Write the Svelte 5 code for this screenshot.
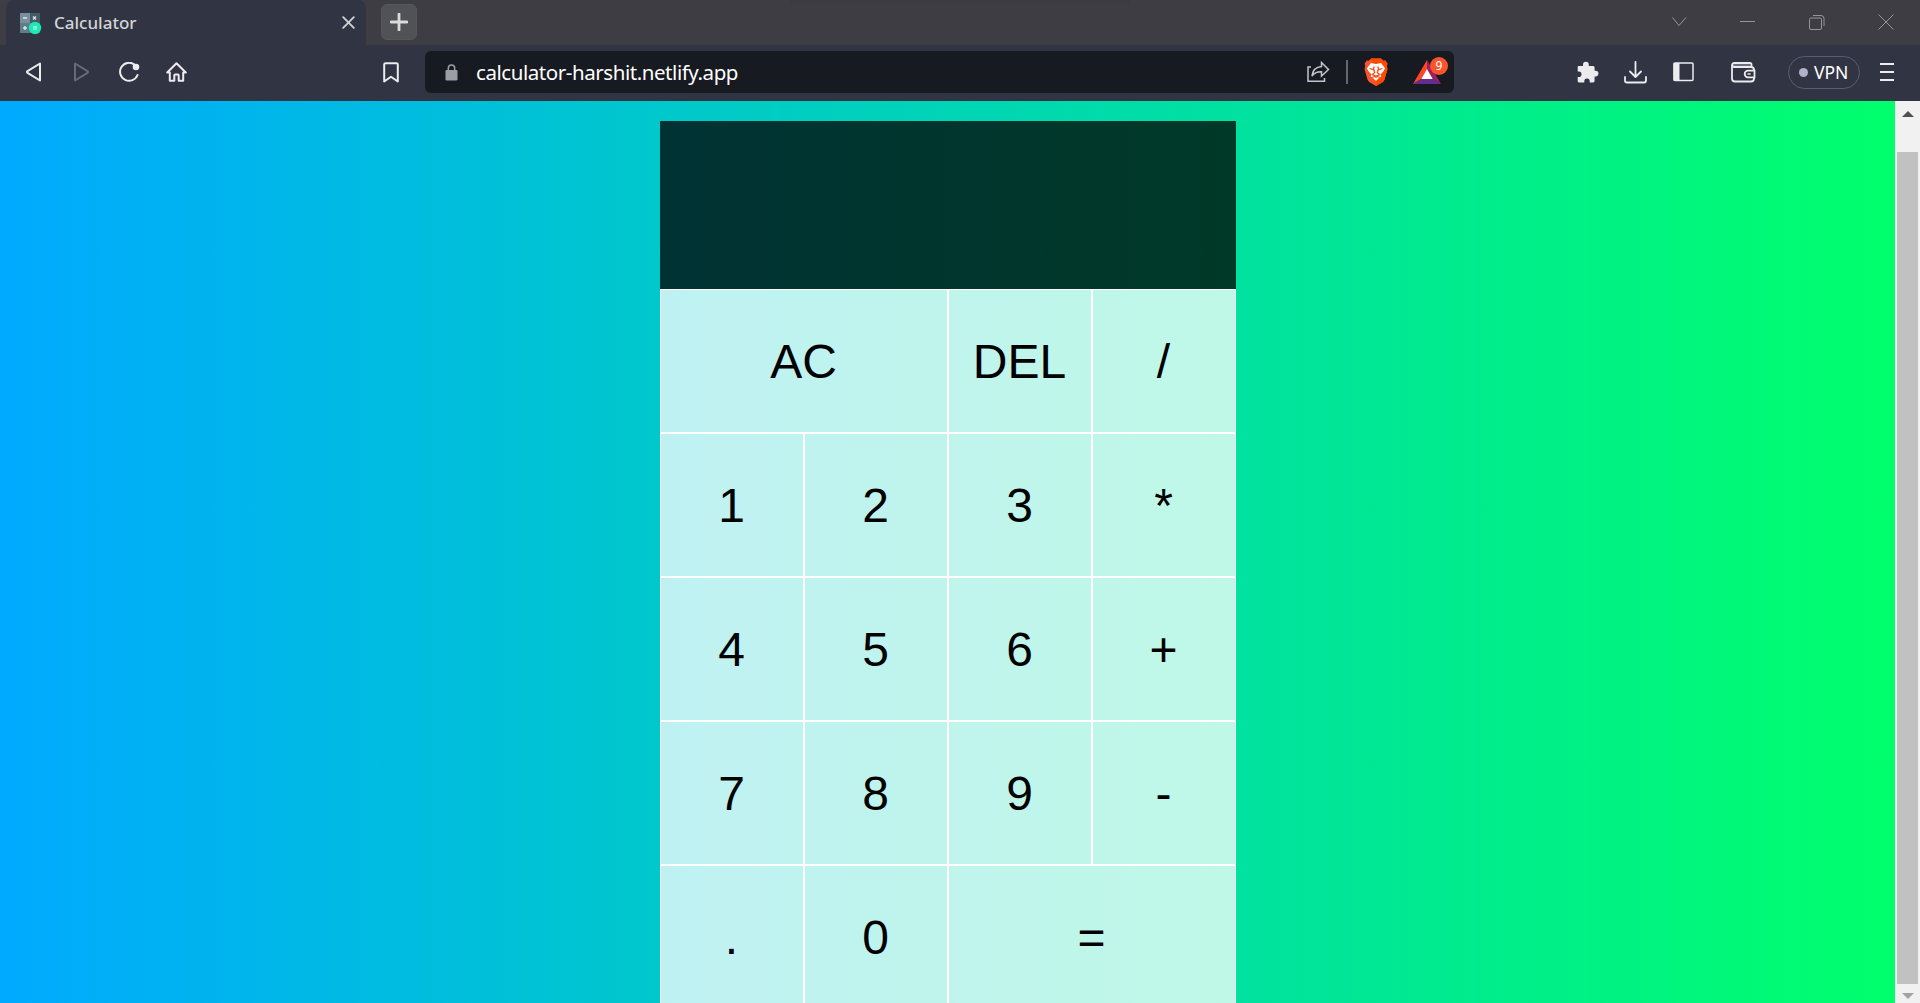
<script>
  const keys = [
    { label: 'AC', wide: true }, { label: 'DEL' }, { label: '/' },
    { label: '1' }, { label: '2' }, { label: '3' }, { label: '*' },
    { label: '4' }, { label: '5' }, { label: '6' }, { label: '+' },
    { label: '7' }, { label: '8' }, { label: '9' }, { label: '-' },
    { label: '.' }, { label: '0' }, { label: '=', wide: true }
  ];
  let output = $state('');

  function press(label) {
    if (label === 'AC') output = '';
    else if (label === 'DEL') output = output.slice(0, -1);
    else if (label !== '=') output += label;
  }
</script>

<div class="window">
  <header class="titlebar">
    <div class="tab">
      <svg class="favicon" width="22" height="22" viewBox="0 0 22 22">
        <rect width="20" height="20" rx="1" fill="#546e7a" />
        <path d="M1 0h9v10H0V1a1 1 0 0 1 1-1z" fill="#78909c" />
        <path d="M10 0h9a1 1 0 0 1 1 1v9H10z" fill="#455a64" />
        <path d="M0 10h10v10H1a1 1 0 0 1-1-1z" fill="#607d8b" />
        <path d="M3 5h4M13 3.500l3 3M16 3.500l-3 3M3 15h4M5 13v4" stroke="#dce3e6" stroke-width="1.400" />
        <circle cx="15" cy="15" r="6.200" fill="#1de9b6" />
        <path d="M13 14h4M13 16.200h4" stroke="#a7f5e0" stroke-width="1.300" />
      </svg>
      <span class="tab-title">Calculator</span>
      <svg class="tab-close" width="13" height="13" viewBox="0 0 13 13"><path d="M1.200 1.200l10.600 10.600M11.800 1.200L1.200 11.800" stroke="#cfd0d4" stroke-width="1.900" stroke-linecap="round" /></svg>
    </div>
    <button class="new-tab" aria-label="New tab">
      <svg width="18" height="18" viewBox="0 0 18 18"><path d="M9 1v16M1 9h16" stroke="#dadadb" stroke-width="2.800" stroke-linecap="round" /></svg>
    </button>
    <div class="controls">
      <svg width="15" height="15" viewBox="0 0 15 15"><path d="M.5 3.500l6.500 8 7-8" /></svg>
      <svg width="15" height="15" viewBox="0 0 15 15"><path d="M0 7.500h15" /></svg>
      <svg width="16" height="16" viewBox="0 0 16 16"><rect x=".5" y="4" width="12" height="11.500" rx="1.500" /><path d="M4 1.500h8a3 3 0 0 1 3 3V12" /></svg>
      <svg width="16" height="16" viewBox="0 0 16 16"><path d="M.5.5l15 15M15.500.5l-15 15" /></svg>
    </div>
    <div class="handle"></div>
  </header>

  <nav class="toolbar">
    <div class="nav-icons">
      <svg width="16" height="20" viewBox="0 0 16 20"><path d="M14 1.500v17L1.500 10.900q-1-.9 0-1.800z" fill="none" stroke="#ececee" stroke-width="2" stroke-linejoin="round" /></svg>
      <svg width="16" height="20" viewBox="0 0 16 20"><path d="M2 1.500v17l12.500-7.600q1-.9 0-1.800z" fill="none" stroke="#686a76" stroke-width="2" stroke-linejoin="round" /></svg>
      <svg width="21" height="20" viewBox="0 0 21 20"><path d="M15.500 2.600A9 9 0 1 0 18.500 13" fill="none" stroke="#ececee" stroke-width="2" stroke-linecap="round" /><circle cx="17" cy="5" r="3.300" fill="#ececee" /></svg>
      <svg width="21" height="20" viewBox="0 0 21 20"><path d="M1.200 10.500L10.500 1.300l9.300 9.200h-2.600v8.300h-4.500v-5.300q0-1-1-1h-2.400q-1 0-1 1v5.300H3.800v-8.300z" fill="none" stroke="#ececee" stroke-width="2" stroke-linejoin="round" /></svg>
    </div>
    <svg class="bookmark" width="16" height="21" viewBox="0 0 16 21"><path d="M1.200 2.500q0-1.300 1.300-1.300h11q1.300 0 1.300 1.300v17L8 14.800l-6.800 4.700z" fill="none" stroke="#ececee" stroke-width="2" stroke-linejoin="round" /></svg>

    <div class="address">
      <svg class="lock" width="13" height="17" viewBox="0 0 13 17"><path d="M3.300 7V4.200a3.200 3.200 0 0 1 6.400 0V7" fill="none" stroke="#9b9da7" stroke-width="1.500" /><rect x=".5" y="6" width="12" height="10.500" rx="1.300" fill="#9b9da7" /></svg>
      <span class="url">calculator-harshit.netlify.app</span>
      <svg class="share" width="23" height="22" viewBox="0 0 23 22" fill="none" stroke="#c4c5c6" stroke-width="1.500"><path d="M4 6H1v14.300h16.500V17" /><path d="M14.500 1.500l7 7-7 6.500v-4.200c-4.500-.2-7.300 1-9.500 4.200.6-5.700 4-9 9.500-9.500z" /></svg>
      <div class="divider"></div>
      <svg class="brave" width="24" height="28" viewBox="0 0 24 28">
        <path d="M7 .5h10l2.300 2.300 2-.3 2.200 3.300-.8 2.200.8 3-3 10.500q-.5 1.700-2 2.800L12 28l-6.500-3.700q-1.500-1.100-2-2.800L.5 11l.8-3-.8-2.200 2.200-3.300 2 .3z" fill="#fb542b" />
        <path d="M7 .5h10l2.300 2.300 2-.3 2.200 3.300-.8 2.200.8 3-3 10.500q-.5 1.700-2 2.800L12 28z" fill="#ff4a00" />
        <path d="M7 5l5 .9L17 5l4 5.200-1.300 2.700-3 3.300.5 2.500-2 1-3.200 3.300-3.200-3.300-2-1 .5-2.500-3-3.300L3 10.200z" fill="#fff" />
        <path d="M5.500 10.500l4.300 1.300M18.500 10.500l-4.300 1.300M10.300 8.500l-.8 2 1.200 4-2.300 2.100 3.600 1.700 3.600-1.700-2.300-2.100 1.200-4-.8-2M12 17.500V20M8 19.500l4-1.500 4 1.500" fill="none" stroke="#fb4b14" stroke-width="1.300" />
      </svg>
      <div class="rewards">
        <svg width="28" height="24" viewBox="0 0 28 24"><path d="M14 0L0 24l9-5.500 5-9z" fill="#ff4724" /><path d="M14 0l14 24-9-5.500-5-9z" fill="#9e1f63" /><path d="M0 24h28l-8.500-5.500h-11z" fill="#662d91" /><path d="M14 9l5.700 10H8.300z" fill="#fff" /></svg>
        <span class="badge">9</span>
      </div>
    </div>

    <div class="tools">
      <svg class="puzzle" width="22" height="22" viewBox="0 0 22 22"><path d="M1.500 5H6V3.700a2.900 2.900 0 0 1 5.800 0V5h4.300q1.500 0 1.500 1.500v3.300h1a2.800 2.800 0 0 1 0 5.600h-1v4.400q0 1.600-1.500 1.600h-3.400v-1.200a2.700 2.700 0 0 0-5.400 0v1.200H2q-1.300 0-1.300-1.400v-4h1a2.800 2.800 0 0 0 0-5.600h-1V6q0-1 .8-1z" fill="#ececee" /></svg>
      <svg class="download" width="23" height="23" viewBox="0 0 23 23"><path d="M11.500 1v15M6 10.500l5.500 5.500 5.500-5.500M1 16v3.500q0 2 2 2h17q2 0 2-2V16" fill="none" stroke="#ececee" stroke-width="1.800" stroke-linecap="round" stroke-linejoin="round" /></svg>
      <svg class="sidebar" width="21" height="20" viewBox="0 0 21 20"><rect x="1" y="1" width="19" height="17.500" rx="1" fill="none" stroke="#ececee" stroke-width="1.500" /><path d="M.5 1h6v17.500h-6z" fill="#ececee" /></svg>
      <svg class="wallet" width="25" height="21" viewBox="0 0 25 21" fill="none" stroke="#ececee"><path d="M20.500 5V2.500q0-1.500-1.500-1.500H3.500Q1 1 1 3.500v13q0 3 3 3h16q3 0 3-3V8q0-3-3-3H3.500Q1.500 5 1.300 3.200" stroke-width="1.800" /><path d="M3 3h17" stroke="#a7a9b5" /><path d="M23.500 8.700H17a3.300 3.300 0 0 0 0 6.600h6.500z" fill="#313442" stroke-width="1.800" /><path d="M16.500 12h3" stroke-width="1.500" /></svg>
      <div class="vpn"><span class="dot"></span><span>VPN</span></div>
      <svg class="menu" width="14" height="20" viewBox="0 0 14 20"><path d="M0 2h14M0 10h14M0 18h14" stroke="#ececee" stroke-width="2" /></svg>
    </div>
  </nav>

  <div class="viewport">
    <main class="page">
      <div class="calculator">
        <div class="output">{output}</div>
        {#each keys as key}
          <button class="key" class:wide={key.wide} onclick={() => press(key.label)}>{key.label}</button>
        {/each}
      </div>
    </main>
    <div class="scrollbar">
      <svg width="12" height="6" viewBox="0 0 12 6"><path d="M6 0l6 6H0z" fill="#505050" /></svg>
      <div class="thumb"></div>
      <svg width="12" height="6" viewBox="0 0 12 6"><path d="M6 6l6-6H0z" fill="#a3a3a3" /></svg>
    </div>
  </div>
</div>

<style>
  :global(body) { overflow: hidden; }
  * { box-sizing: border-box; }
  svg { display: block; flex: none; }
  button { font: inherit; padding: 0; }
  .window { height: 1003px; display: flex; flex-direction: column; overflow: hidden; font-family: "Noto Sans", sans-serif; }
  .titlebar { position: relative; height: 45px; flex: none; display: flex; background: #3e3d44; padding-left: 6px; }
  .tab { width: 360px; height: 45px; display: flex; align-items: center; background: #313442; border-radius: 8px 8px 0 0; padding: 0 11px 0 14px; }
  .favicon { margin-top: 2px; }
  .tab-title { margin-left: 12px; font: 500 17px/22px "Noto Sans", sans-serif; color: #d3d4d8; flex: 1; }
  .new-tab { width: 36px; height: 36px; margin: 4px 0 0 15px; border: 1px solid #57575b; border-radius: 6px; background: #515256; display: grid; place-items: center; }
  .controls { margin-left: auto; height: 43px; padding-right: 26px; display: flex; align-items: center; gap: 53.330px; fill: none; stroke: #96969a; stroke-width: 1; }
  .handle { position: absolute; left: 790px; top: 0; width: 340px; height: 7px; background: linear-gradient(#3b3c3e, #3e3d44); }
  .toolbar { height: 56px; flex: none; display: flex; align-items: center; background: #313442; padding: 0 26px 2px 26px; }
  .nav-icons { display: flex; align-items: center; gap: 32px; width: 162px; }
  .nav-icons svg:nth-child(2) { margin-left: -1px; }
  .nav-icons svg:nth-child(3) { margin-left: -2px; }
  .nav-icons svg:nth-child(4) { margin-left: -6px; }
  .bookmark { margin-left: 195px; }
  .address { width: 1029px; height: 42px; margin-left: 26px; display: flex; align-items: center; background: #181a21; border-radius: 6px; padding-left: 20px; }
  .url { margin-left: 18px; font: 20.500px/28px "Noto Sans", sans-serif; letter-spacing: -.44px; color: #fff; flex: 1; }
  .share { margin-right: 16px; }
  .divider { width: 2px; height: 24px; background: #65676d; }
  .brave { margin-left: 16px; }
  .rewards { position: relative; margin: 0 13px 0 25px; width: 28px; }
  .badge { position: absolute; left: 17px; top: -3px; width: 18px; height: 18px; border-radius: 9px; background: #fb542b; color: #fff; font: 12px/18px "Noto Sans", sans-serif; text-align: center; }
  .tools { display: flex; align-items: center; margin-left: auto; }
  .download { margin-left: 25px; }
  .sidebar { margin-left: 26px; }
  .wallet { margin-left: 37px; }
  .vpn { width: 72px; height: 33px; margin-left: 32px; border: 1.500px solid #5b5d75; border-radius: 17px; display: flex; align-items: center; gap: 6px; padding-left: 10px; color: #fff; font: 17.500px/28px "Noto Sans", sans-serif; }
  .dot { width: 9px; height: 9px; border-radius: 50%; background: #b0b1c8; }
  .menu { margin-left: 20px; }
  .viewport { flex: 1; min-height: 0; display: flex; }
  .page { flex: 1; display: flex; justify-content: center; padding-top: 20px; background: linear-gradient(to right, #00aaff, #00ff6c); overflow: hidden; }
  .calculator { display: grid; grid-template-columns: repeat(4, 144px); grid-template-rows: 168px repeat(5, 144px); align-content: start; }
  .output { grid-column: 1 / -1; background: rgba(0, 0, 0, .75); color: #fff; font-size: 48px; text-align: right; }
  .key { padding-top: 1px; border: 1px solid #fff; background: rgba(255, 255, 255, .75); color: #000; font: 48px/53px "Liberation Sans", Arial, sans-serif; }
  .wide { grid-column: span 2; }
  .scrollbar { width: 25px; background: #f1f1f1; display: flex; flex-direction: column; align-items: center; padding: 10px 0 4px; }
  .thumb { width: 21px; flex: 1; margin: 35px 0 9px; background: #c1c1c1; }
</style>
